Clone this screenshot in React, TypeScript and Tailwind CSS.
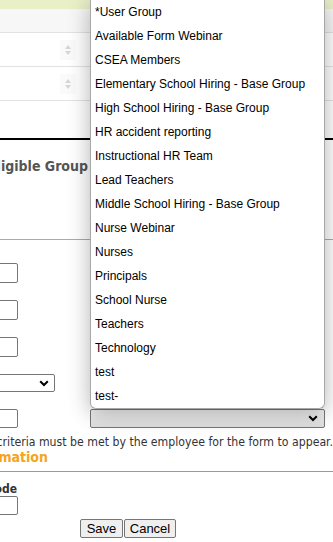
import React from 'react';

const groups = [
  '*User Group',
  'Available Form Webinar',
  'CSEA Members',
  'Elementary School Hiring - Base Group',
  'High School Hiring - Base Group',
  'HR accident reporting',
  'Instructional HR Team',
  'Lead Teachers',
  'Middle School Hiring - Base Group',
  'Nurse Webinar',
  'Nurses',
  'Principals',
  'School Nurse',
  'Teachers',
  'Technology',
  'test',
  'test-',
];

const Chevron: React.FC = () => (
  <svg width="10" height="7" viewBox="0 0 10 7">
    <path d="M1.2 1.2 L5 5 L8.8 1.2" stroke="#000" strokeWidth="2" fill="none" />
  </svg>
);

const SortIcon: React.FC = () => (
  <svg width="8" height="12" viewBox="0 0 8 12">
    <path d="M4 1 L7 5 H1 Z M4 11 L1 7 H7 Z" fill="#d6d6d6" />
  </svg>
);

const TableRow: React.FC = () => (
  <div className="h-[34px] border-b border-[#e2e2e2] flex items-center">
    <div className="ml-[60px] w-[16px] h-[20px] bg-[#fafafa] flex items-center justify-center">
      <SortIcon />
    </div>
  </div>
);

const input = 'block h-[20px] w-[120px] ml-[-102px] border border-[#767676] rounded-[2px] bg-white';

const App: React.FC = () => {
  return (
    <div className="relative w-[333px] h-[542px] overflow-hidden bg-white font-['DejaVu_Sans_Condensed','DejaVu_Sans',sans-serif] text-[#333]">
      {/* grid top */}
      <div className="h-[9px] bg-[#e9efc7]" />
      <div className="h-[24px] bg-[#f7f7f7] border-b border-[#e2e2e2]" />
      <TableRow />
      <TableRow />
      <div className="h-[37px]" />
      <div className="h-[2px] bg-black" />

      {/* eligible group */}
      <div className="h-[99px] pt-[17px]">
        <div className="w-[88px] flex justify-end whitespace-nowrap text-[14px] leading-[18px] font-bold text-[#555]">
          Eligible Group
        </div>
      </div>
      <div className="h-px bg-[#aaa]" />

      {/* criteria */}
      <input className={`${input} mt-[23px]`} />
      <input className={`${input} mt-[17px]`} />
      <input className={`${input} mt-[17px]`} />
      <div className="mt-[17px] h-[18px] w-[160px] ml-[-105px] border border-[#767676] rounded-[2px] flex items-center justify-end pr-[5px]">
        <Chevron />
      </div>
      <div className="mt-[17px] flex items-center">
        <input className="block h-[19px] w-[120px] ml-[-102px] border border-[#767676] rounded-[2px] bg-white" />
        <div className="ml-[72px] h-[19px] w-[235px] border border-[#767676] rounded-[2px] bg-gradient-to-b from-[#f3f3f3] to-[#dedede] flex items-center justify-end pr-[6px]">
          <Chevron />
        </div>
      </div>
      <div className="mt-[7px] w-[333px] flex justify-end whitespace-nowrap text-[12.2px] leading-[14px]">
        criteria must be met by the employee for the form to appear.
      </div>
      <div className="w-[48px] flex justify-end whitespace-nowrap text-[14px] leading-[17px] font-bold text-[#f6a41c]">
        Additional Information
      </div>
      <div className="mt-[5px] h-px bg-[#999]" />
      <div className="mt-[10px] w-[17px] flex justify-end whitespace-nowrap text-[12px] leading-[14px] font-bold">
        Zip Code
      </div>
      <input className="block h-[19px] w-[120px] ml-[-102px] border border-[#767676] rounded-[2px] bg-white" />
      <div className="mt-[4px] ml-[80px] flex gap-px font-['Liberation_Sans',Arial,sans-serif] text-[13px]">
        <button className="h-[19px] w-[43px] bg-[#efefef] border border-[#767676] rounded-[2px] leading-none text-black">Save</button>
        <button className="h-[19px] w-[52px] bg-[#efefef] border border-[#767676] rounded-[2px] leading-none text-black">Cancel</button>
      </div>

      {/* open dropdown list */}
      <div className="absolute left-[90px] top-0 w-[235px] bg-white border border-t-0 border-[#a8a8a8] rounded-b-[6px] shadow-[0_4px_22px_rgba(0,0,0,0.3)] font-['Liberation_Sans',Arial,sans-serif] text-[12px] text-black">
        {groups.map((g) => (
          <div key={g} className="h-[24px] px-[4px] flex items-center whitespace-nowrap">
            {g}
          </div>
        ))}
      </div>
    </div>
  );
};

export default App;
